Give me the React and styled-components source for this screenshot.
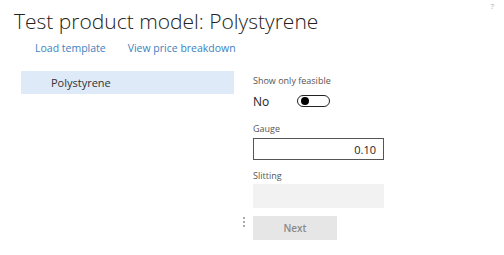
import styled, { createGlobalStyle } from 'styled-components';

const GlobalStyle = createGlobalStyle`
  html, body {
    margin: 0;
    padding: 0;
    background: #fff;
    font-family: "Open Sans", "Noto Sans", sans-serif;
  }
`;

const Page = styled.div`
  position: relative;
  width: 504px;
  height: 255px;
  padding: 7px 0 0 14px;
  box-sizing: border-box;
`;

const Corner = styled.span`
  position: absolute;
  top: 0;
  right: 10px;
  font-size: 8px;
  color: #aaa;
`;

const Title = styled.h1`
  margin: 0;
  font-size: 21px;
  font-weight: 300;
  color: #222;
  line-height: 28px;
`;

const Actions = styled.div`
  display: flex;
  gap: 22px;
  margin: 5px 0 0 21px;
`;

const ActionLink = styled.a`
  font-size: 10.5px;
  color: #3d7fc1;
  text-decoration: none;
  line-height: 16px;
`;

const Body = styled.div`
  display: flex;
  margin-top: 15px;
  margin-left: 7px;
`;

const List = styled.div`
  width: 213px;
`;

const ListItem = styled.div`
  height: 23px;
  display: flex;
  align-items: center;
  padding-left: 30px;
  font-size: 11px;
  color: #333;
  background: ${p => (p.$selected ? '#deeaf8' : 'transparent')};
`;

const Gutter = styled.div`
  width: 19px;
  display: flex;
  flex-direction: column;
  justify-content: flex-end;
  align-items: center;
  padding-bottom: 13px;
  gap: 2px;
`;

const Dot = styled.span`
  width: 2px;
  height: 2px;
  background: #aaa;
`;

const Form = styled.div`
  width: 131px;
  display: flex;
  flex-direction: column;
  padding-top: 4px;
`;

const Label = styled.div`
  font-size: 9px;
  color: #555;
  line-height: 12px;
  margin-bottom: ${p => p.$gap ?? 3}px;
`;

const ToggleRow = styled.div`
  display: flex;
  align-items: center;
  gap: 27px;
  height: 18px;
  margin-bottom: 13px;
`;

const ToggleText = styled.span`
  font-size: 12px;
  color: #222;
  width: 17px;
`;

const Switch = styled.span`
  width: 28px;
  height: 10px;
  border: 1.5px solid #222;
  border-radius: 8px;
  display: flex;
  align-items: center;
  padding-left: 3px;
`;

const Knob = styled.span`
  width: 8px;
  height: 8px;
  border-radius: 50%;
  background: #000;
`;

const Input = styled.div`
  height: ${p => (p.$disabled ? 24 : 22)}px;
  box-sizing: border-box;
  border: 1px solid ${p => (p.$disabled ? '#f2f2f2' : '#555')};
  background: ${p => (p.$disabled ? '#f2f2f2' : '#fff')};
  display: flex;
  align-items: center;
  justify-content: flex-end;
  padding-right: 7px;
  font-size: 11px;
  color: #222;
  margin-bottom: ${p => p.$gap ?? 0}px;
`;

const Button = styled.button`
  width: 84px;
  height: 24px;
  border: none;
  background: #e6e6e6;
  color: #8a8a8a;
  font-family: inherit;
  font-size: 10px;
  font-weight: 600;
  padding: 0;
`;

export default function App() {
  return (
    <>
      <GlobalStyle />
      <Page>
        <Corner>?</Corner>
        <Title>Test product model: Polystyrene</Title>
        <Actions>
          <ActionLink href="#">Load template</ActionLink>
          <ActionLink href="#">View price breakdown</ActionLink>
        </Actions>
        <Body>
          <List>
            <ListItem $selected>Polystyrene</ListItem>
          </List>
          <Gutter>
            <Dot />
            <Dot />
            <Dot />
          </Gutter>
          <Form>
            <Label $gap={5}>Show only feasible</Label>
            <ToggleRow>
              <ToggleText>No</ToggleText>
              <Switch>
                <Knob />
              </Switch>
            </ToggleRow>
            <Label>Gauge</Label>
            <Input $gap={10}>0.10</Input>
            <Label $gap={2}>Slitting</Label>
            <Input $disabled $gap={8} />
            <Button>Next</Button>
          </Form>
        </Body>
      </Page>
    </>
  );
}
